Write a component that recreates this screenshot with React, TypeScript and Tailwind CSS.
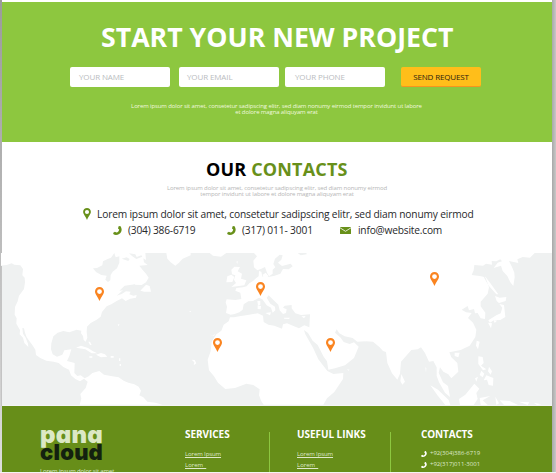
import React from "react";

function PinShape({ className }: { className: string }) {
  return (
    <svg viewBox="0 0 9 14" className={className} fill="currentColor">
      <path
        fillRule="evenodd"
        d="M4.5 0C2 0 0 1.9 0 4.4 0 7.4 2.6 9 4.5 14 6.4 9 9 7.4 9 4.4 9 1.9 7 0 4.5 0Zm0 2.2a2.4 2.4 0 1 1 0 4.8 2.4 2.4 0 0 1 0-4.8Z"
      />
    </svg>
  );
}

function Phone({ className }: { className: string }) {
  return (
    <svg viewBox="0 0 9 9" className={className} fill="currentColor">
      <path d="M5.6.3 7.2 0C8.6 1.5 9 3.6 8.3 5.4 7.2 8.2 4 9.6.8 8.6L0 7l1.9-1.3 1.5.9c1.6-.3 2.6-1.4 2.8-3L5 2.5Z" />
    </svg>
  );
}

const fields = [
  { label: "YOUR NAME", box: "ml-[68px] w-[100px] pl-[9px]" },
  { label: "YOUR EMAIL", box: "ml-[9px] w-[100px] pl-2" },
  { label: "YOUR PHONE", box: "ml-[6px] w-[100px] pl-[10px]" },
];

function StartProject() {
  return (
    <section className="flex h-[140px] flex-col bg-[#8dc73f]">
      <h1 className="mt-[18px] ml-[99px] h-[34px] whitespace-nowrap text-[26.7px] leading-[34px] font-bold text-white">
        START YOUR NEW PROJECT
      </h1>
      <form className="mt-[13px] flex h-5">
        {fields.map((f) => (
          <div
            key={f.label}
            className={`${f.box} h-5 shrink-0 rounded-[2px] bg-white text-[8px] leading-5 tracking-[-0.12px] whitespace-nowrap text-[#b9bcc0]`}
          >
            {f.label}
          </div>
        ))}
        <button
          type="button"
          className="ml-4 h-5 w-20 rounded-[2px] border-b border-[#f7941e] bg-[#ffbe1a] text-[8px] leading-[19px] tracking-[-0.15px] whitespace-nowrap text-[#2b2110]"
        >
          SEND REQUEST
        </button>
      </form>
      <p className="mt-[16px] pr-[1px] text-center text-[6px] leading-[6px] tracking-[-0.115px] whitespace-nowrap text-[#f0f8df]">
        Lorem ipsum dolor sit amet, consetetur sadipscing elitr, sed diam nonumy eirmod tempor invidunt ut labore
        <br />
        et dolore magna aliquyam erat
      </p>
    </section>
  );
}

function Contacts() {
  return (
    <section className="flex h-[111px] flex-col bg-white text-[#27282a]">
      <h2 className="mt-[15px] ml-[204px] h-6 text-[18px] leading-6 font-bold tracking-[0.17px] whitespace-nowrap text-black">
        OUR <span className="text-[#68901a]">CONTACTS</span>
      </h2>
      <p className="mt-[4px] text-center text-[6px] leading-[6px] tracking-[-0.115px] whitespace-nowrap text-[#b6b6b6]">
        Lorem ipsum dolor sit amet, consetetur sadipscing elitr, sed diam nonumy eirmod
        <br />
        tempor invidunt ut labore et dolore magna aliquyam erat
      </p>
      <div className="mt-[9px] ml-[81px] flex h-4 items-center">
        <PinShape className="h-[12px] w-[8px] text-[#68901a]" />
        <span className="ml-[6px] text-[10.2px] leading-4 tracking-[-0.16px] whitespace-nowrap">
          Lorem ipsum dolor sit amet, consetetur sadipscing elitr, sed diam nonumy eirmod
        </span>
      </div>
      <div className="ml-[111px] flex h-4 items-center text-[10.2px] leading-4 tracking-[-0.2px] whitespace-nowrap">
        <Phone className="h-[9px] w-[9px] text-[#68901a]" />
        <span className="ml-[6px] w-[99px]">(304) 386-6719</span>
        <Phone className="h-[9px] w-[9px] text-[#68901a]" />
        <span className="ml-[6px] w-[98px] tracking-[-0.13px]">(317) 011- 3001</span>
        <svg viewBox="0 0 11 7" className="h-[7px] w-[11px]">
          <rect width="11" height="7" rx=".5" fill="#68901a" />
          <path d="M0 .8 5.5 4.3 11 .8" fill="none" stroke="#fff" strokeWidth=".8" />
        </svg>
        <span className="ml-[7px]">info@website.com</span>
      </div>
    </section>
  );
}

const pins = [
  "left-[94px] top-[34px]",
  "left-[255px] top-[29px]",
  "left-[212px] top-[85px]",
  "left-[325px] top-[85px]",
  "left-[429px] top-[19px]",
];

function WorldMap() {
  return (
    <section className="relative -ml-px h-[153px] w-[551px] bg-[#eff1f1]">
      <svg viewBox="3 759 1653 459" className="block h-[153px] w-[551px]">
        <g transform="translate(0 735)" fill="#fff">
          <path d="M0 24H436L438 45 430 40 432 52 443 60 418 62 428 75 438 86 446 98 438 112 425 120 400 119 385 124 370 134 357 146 350 152 365 147 378 139 392 140 388 148 400 152 410 150 408 158 391 161 377 168 366 160 350 168 334 178 320 184 306 201 302 215 290 224 272 234 261 245 260 260 262 278 257 290 251 285 249 273 243 265 244 257 230 254 208 262 190 258 173 263 160 274 154 295 153 313 158 328 171 335 187 329 193 316 214 313 208 333 201 348 224 354 223 384 232 393 242 391 254 400 266 394 277 384 298 378 312 389 337 394 356 397 371 407 385 413 403 418 416 425 423 437 418 451 430 457 442 470 466 473 487 479H239L244 461 241 447 257 429 263 410 252 401 240 409 226 402 213 391 207 374 190 366 176 354 161 350 139 347 121 339 108 330 106 314 97 300 88 288 80 277 75 263 72 250 67 249 69 266 77 278 84 296 85 306 73 294 69 278 59 268 60 255 49 236 50 220 44 209 45 186 53 169 57 152 72 132 75 112 74 98 67 91 69 72 61 61 43 59 35 55 20 60 0 62Z" />
          <path fill="#eff1f1" d="M343 24 347 37 358 34 358 53 351 70 338 80 332 90 331 106 324 111 316 104 320 92 304 90 288 81 279 70 291 69 307 61 309 49 323 42 333 38ZM365 41 380 37 389 42 385 48ZM387 25 406 28 410 36 424 31 427 35 409 42 397 34ZM358 137 374 122 405 118 407 124 396 128 391 139 378 135Z" />
          <path d="M421 137 438 119 449 123 453 140 433 140ZM228 308 243 302 264 309 279 319 292 325 275 325 256 313ZM288 329 303 324 315 328 322 335 303 337ZM268 334H277V338H268ZM332 333H341V338H332ZM499 24 502 41 511 51 526 62 537 53 548 41 572 31V24ZM265 290H270L275 300H270ZM353 239 359 236 355 244ZM357 340H361V348H357ZM359 357H363V363H359Z" />
        </g>
        <g transform="translate(555 735)" fill="#fff">
          <path d="M207 24 216 34 205 47 207 67 217 76 229 71 240 66 246 83 252 94 263 86 263 74 271 67 265 57 270 41 284 29 293 31 289 44 279 53 291 63 317 56 323 64 311 73 294 72 286 86 269 92 250 96 240 91 232 95 229 80 222 78 221 94 214 99 204 108 193 115 185 124 174 127 154 129 151 137 166 143 169 162 151 165 125 163 122 172 126 185 123 204 137 209 149 207 163 202 173 194 176 178 190 169 204 168 222 158 232 163 245 181 258 188 263 203 271 196 270 185 256 176 245 158 251 151 266 166 280 179 284 196 294 207 303 204 305 193 294 188 299 182 320 180 320 190 331 205 348 210 375 208 373 247 358 241 342 250 320 241 306 235 294 238 291 251 268 242 250 239 236 231 234 212 218 205 188 210 163 214 147 217 135 217 131 229 116 239 109 257 94 268 80 290 77 319 68 344 72 376 87 394 99 413 121 432 150 429 184 416 205 420 224 433 222 451 229 469 236 479H415L426 460 448 441 474 402 475 384 445 387 427 378 400 343 384 308 361 268 357 255 369 264 383 287 398 300 416 335 426 349 430 374 450 370 480 361 507 339 521 305 507 292 494 297 476 291 467 278 450 263 455 253 463 265 479 274 503 279 517 290 543 289V24Z" />
          <path d="M139 74 148 65 165 66 158 79 171 86 168 101 184 106 178 121 139 126 153 114 147 104 151 91 141 88ZM127 94 139 89 148 96 142 111 124 112ZM74 24 84 32 108 35 124 24ZM232 90 242 83 251 94 241 99ZM217 168H226V179L219 181ZM218 181 228 183 227 193 218 192ZM241 204 258 202 255 211ZM296 218 315 218 312 222 298 221ZM349 214 362 213 357 220ZM154 50 158 48 157 57ZM12 200 17 197 18 201ZM20 344 29 345 34 355 26 361 28 352ZM486 373 494 374 490 377ZM73 269 84 271 91 267 87 272Z" />
          <path fill="#eff1f1" d="M338 24 347 31 365 28 364 24Z" />
        </g>
        <g transform="translate(1098 735)" fill="#fff">
          <path d="M-2 24H506L492 38 470 36 454 43 457 54 429 48 438 66 445 83 446 97 442 123 433 112 424 93 410 78 405 62 383 69 395 53 408 49 403 43 391 49 377 48 378 59 360 56 351 62 325 60 323 76 317 90 341 93 359 97 369 127 365 146 344 170 344 184 358 203 357 222 344 220 335 204 327 205 324 192 309 196 305 183 287 194 300 202 317 204 306 219 321 233 331 254 328 276 311 302 284 315 265 319 250 322 256 337 274 354 277 380 256 400 247 388 232 380 222 367 218 383 231 412 246 423 252 456 237 443 219 412 212 393 212 367 202 348 189 350 177 324 165 307 155 313 136 315 105 350 102 386 94 404 78 385 64 354 60 321 51 318 41 307 21 290-2 289Z" />
          <path fill="#eff1f1" d="M352 94 364 101 378 115 386 137 397 157 383 145 376 130 362 112Z" />
          <path d="M357 94 372 113 397 148 391 148 367 121ZM387 153 401 158 421 156 419 168 399 174 392 168ZM400 177 414 180 418 216 403 225 383 226 372 233 367 226 391 211 404 205 409 188ZM366 233 378 235 375 250ZM383 226 393 227 386 234ZM332 287 341 290 336 313 330 302ZM266 323 281 323 277 337 266 333ZM106 387 117 410 109 419 103 408ZM337 334 350 336 353 354 345 362 361 373 351 376 337 357ZM369 365 378 379 374 389 366 379ZM346 377 355 386 350 397 341 390ZM361 391 382 399 381 422 368 420 363 404 353 406ZM193 421 216 434 248 465 253 480H238L216 453ZM279 462 298 449 325 416 340 431 331 444 335 462 323 480H282ZM341 459 373 453 350 466 365 480H344ZM388 455 399 475 391 480ZM401 466 431 468 456 480H414ZM458 470 490 472 485 480ZM503 473 526 478 513 480ZM327 400 336 395 331 410ZM178 367 181 369 180 383Z" />
        </g>
        <path d="M3 1215H1656V1218H3Z" fill="#f3f5f5" />
        <path d="M3 798H6V1218H3Z" fill="#c4c4c4" />
      </svg>
      {pins.map((p) => (
        <PinShape key={p} className={`absolute ${p} h-[14px] w-[9px] text-[#fa8420]`} />
      ))}
    </section>
  );
}

function LinkColumn({ title, className }: { title: string; className: string }) {
  return (
    <div className={className}>
      <h3 className="h-3 text-[10px] leading-3 font-bold tracking-[-0.05px] text-white">{title}</h3>
      <a className="mt-[10px] block h-[9px] text-[6px] leading-[9px] tracking-[-0.1px] underline">Lorem Ipsum</a>
      <a className="mt-[2px] block h-[9px] text-[6px] leading-[9px] whitespace-pre underline">{"Lorem  "}</a>
    </div>
  );
}

function Footer() {
  return (
    <footer className="flex h-[66px] overflow-hidden bg-[#678e19] whitespace-nowrap text-[#dfe9cc]">
      <div className="ml-[38px] w-[145px] shrink-0 pt-[20px]">
        <div className="h-[17px] font-['Inter'] text-[24px] leading-[17px] font-black tracking-[0.2px] text-[#dce8c5] [font-feature-settings:'cv11']">
          pana
        </div>
        <div className="h-[18px] font-['Inter'] text-[22px] leading-[18px] font-black tracking-[0.2px] text-[#13210f] [font-feature-settings:'cv11']">
          cloud
        </div>
        <p className="mt-[6px] text-[6px] leading-[9px] tracking-[-0.12px]">Lorem ipsum dolor sit amet,</p>
      </div>
      <LinkColumn title="SERVICES" className="w-[84px] shrink-0 pt-[22px]" />
      <div className="mt-[26px] w-px shrink-0 bg-[#8dc73f]" />
      <LinkColumn title="USEFUL LINKS" className="ml-[27px] w-[93px] shrink-0 pt-[22px]" />
      <div className="mt-[26px] w-px shrink-0 bg-[#8dc73f]" />
      <div className="ml-[30px] pt-[22px] text-[6px]">
        <h3 className="h-3 text-[10px] leading-3 font-bold tracking-[-0.15px] text-white">CONTACTS</h3>
        <div className="mt-[8px] flex h-[11px] items-center leading-[11px]">
          <Phone className="mr-[3px] h-[6px] w-[6px] text-white" />
          +92(304)386-6719
        </div>
        <div className="flex h-[11px] items-center leading-[11px]">
          <Phone className="mr-[3px] h-[6px] w-[6px] text-white" />
          +92(317)011-3001
        </div>
      </div>
    </footer>
  );
}

export default function App() {
  return (
    <div className="flex h-[473px] w-[556px] bg-[#f3f3f3] font-['Open_Sans','Noto_Sans',sans-serif]">
      <div className="h-[472px] w-[2px] shrink-0 bg-linear-to-b from-[#9b9b9b] to-[#dddddd]" />
      <main className="h-[472px] w-[550px] shrink-0 bg-white pt-[2px]">
        <StartProject />
        <Contacts />
        <WorldMap />
        <Footer />
      </main>
      <div className="h-[472px] w-1 shrink-0 bg-linear-to-r from-[#a8a8a8] to-[#c8c8c8]" />
    </div>
  );
}
